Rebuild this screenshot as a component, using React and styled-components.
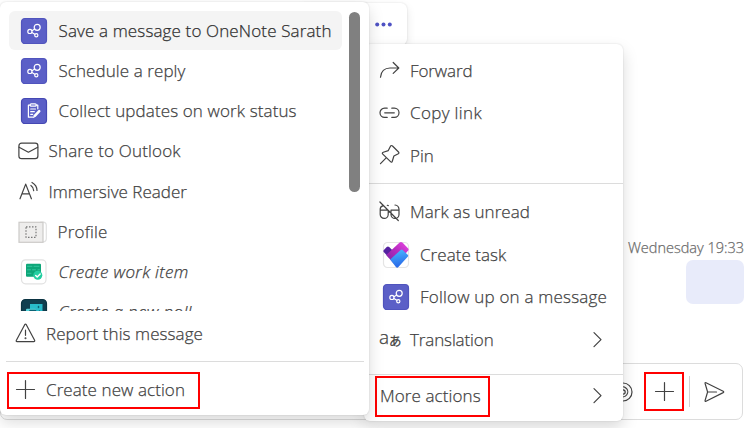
import React from "react";
import styled, { createGlobalStyle } from "styled-components";

const Global = createGlobalStyle`
  * { box-sizing: border-box; }
  body { margin: 0; background: #fff; overflow: hidden; }
`;

const Page = styled.div`
  position: relative;
  width: 750px;
  height: 428px;
  overflow: hidden;
  background: #fff;
  color: #424242;
  font-family: "Open Sans", "Noto Sans", sans-serif;
  font-size: 17px;
  font-weight: 300;
  -webkit-text-stroke: 0.25px currentColor;
`;

const Conversation = styled.main`
  display: flex;
  flex-direction: column;
  align-items: flex-end;
  height: 100%;
  padding: 237px 6px 8px 0;
`;

const Timestamp = styled.time`
  height: 23px;
  line-height: 21px;
  font-size: 14.5px;
  color: #6c6c6c;
  white-space: nowrap;
`;

const Bubble = styled.div`
  width: 58px;
  height: 44px;
  border-radius: 7px;
  background: #e8ebfa;
`;

const Composer = styled.div`
  display: flex;
  align-items: center;
  justify-content: flex-end;
  width: 743px;
  height: 57px;
  margin-top: auto;
  margin-right: 1px;
  padding-right: 17px;
  border: 1px solid #dcdcdc;
  border-radius: 7px;
`;

const AddButton = styled.button`
  display: grid;
  place-items: center;
  width: 40px;
  height: 39px;
  margin: 0 5px 0 12px;
  padding: 0;
  border: 2px solid #f00;
  background: none;
`;

const ComposerDivider = styled.span`
  width: 1px;
  height: 31px;
  margin-right: 14px;
  background: #d1d1d1;
`;

const Menu = styled.section`
  position: absolute;
  display: flex;
  flex-direction: column;
  background: #fff;
  border-radius: 6px;
  box-shadow: 0 0 2px rgba(0, 0, 0, 0.14), 0 7px 16px rgba(0, 0, 0, 0.15);
`;

const MessageToolbar = styled(Menu)`
  left: 300px;
  top: 3px;
  width: 107px;
  height: 42px;
  flex-direction: row;
  align-items: center;
  justify-content: flex-end;
  padding: 0 14px 0 0;
  box-shadow: 0 0 2px rgba(0, 0, 0, 0.13), 0 4px 10px rgba(0, 0, 0, 0.1);
`;

const MessageMenu = styled(Menu)`
  left: 364px;
  top: 44px;
  width: 259px;
  height: 377px;
  padding-top: 5.4px;
`;

const ActionsMenu = styled(Menu)`
  left: 0;
  top: 2px;
  width: 369px;
  height: 413px;
  padding-top: 9px;
`;

const ActionList = styled.div`
  display: flex;
  justify-content: space-between;
  height: 300px;
  padding: 0 9px;
  overflow: hidden;
`;

const ActionItems = styled.div`
  width: 333px;
`;

const ScrollThumb = styled.div`
  width: 11px;
  height: 180px;
  margin-top: 1px;
  border-radius: 6px;
  background: #808080;
`;

const ActionRow = styled.div`
  display: flex;
  align-items: center;
  gap: ${(p) => (p.$badge ? 11.5 : 10.5)}px;
  height: 39px;
  margin-bottom: 1.25px;
  padding-left: ${(p) => (p.$badge ? 12 : 9)}px;
  border-radius: 6px;
  background: ${(p) => (p.$selected ? "#f4f4f4" : "transparent")};
  color: ${(p) => (p.$selected ? "#303030" : "inherit")};
`;

const MenuRow = styled.div`
  display: flex;
  align-items: center;
  gap: ${(p) => (p.$badge ? 11 : 10)}px;
  height: 42.5px;
  padding: 0 21px 0 ${(p) => (p.$badge ? 19 : 15)}px;
`;

const Divider = styled.hr`
  flex: none;
  height: 1px;
  margin: ${(p) => p.$margin};
  border: 0;
  background: #dcdcdc;
`;

const Label = styled.span`
  flex: 1;
  line-height: 24px;
  white-space: nowrap;
  letter-spacing: ${(p) => p.$tracking || 0}px;
  font-style: ${(p) => (p.$italic ? "italic" : "normal")};
`;

const ReportRow = styled.div`
  display: flex;
  align-items: center;
  gap: 10px;
  height: 45px;
  padding-left: 15px;
`;

const CreateAction = styled.button`
  display: flex;
  align-items: center;
  gap: 11px;
  width: 193px;
  height: 37px;
  margin: 10px 0 0 7px;
  padding: 0 0 2px 7px;
  border: 2px solid #f00;
  background: none;
  color: inherit;
  font: inherit;
  text-align: left;
`;

const MoreRow = styled.div`
  display: flex;
  align-items: center;
  justify-content: space-between;
  height: 43px;
  padding: 0 21px 0 11px;
`;

const MoreButton = styled.button`
  display: flex;
  align-items: center;
  width: 115px;
  height: 41px;
  padding: 0 0 1px 3px;
  border: 2px solid #f00;
  background: none;
  color: inherit;
  font: inherit;
  text-align: left;
`;

const Svg = styled.svg`
  flex: none;
  display: block;
  overflow: visible;
  fill: none;
  stroke: #424242;
  stroke-width: 1.2;
  stroke-linecap: round;
  stroke-linejoin: round;
`;

const Glyph = ({ w = 20, h = 20, children }) => (
  <Svg width={w} height={h} viewBox={`0 0 ${w} ${h}`}>{children}</Svg>
);

const FlowIcon = () => (
  <Glyph w={26} h={26}>
    <rect x=".5" y=".5" width="25" height="25" rx="3.5" fill="#5b5fc7" stroke="#5054bd" />
    <g stroke="#fff" strokeWidth="1.2">
      <circle cx="16.2" cy="9.3" r="3" />
      <circle cx="8.9" cy="13.4" r="2.1" />
      <circle cx="15.3" cy="17.2" r="1.6" />
      <path d="M11 12.8l2.7-1.7M10.9 14.5l2.9 1.8" />
    </g>
  </Glyph>
);

const ClipboardIcon = () => (
  <Glyph w={26} h={26}>
    <rect x=".5" y=".5" width="25" height="25" rx="3.5" fill="#5b5fc7" stroke="#4548b3" />
    <g stroke="#fff" strokeWidth="1.2">
      <path d="M9 7.2H7.4v12h4.3M15.2 7.2h1.6v3.6" />
      <rect x="9.2" y="5.8" width="6" height="2.4" rx="1" />
      <path d="M9.7 11h4.8M9.7 13.7h3.6M9.7 16.3h2" />
      <path d="M18.2 13.2l-4.4 4.7" strokeWidth="2.6" />
      <path d="M12.7 19.4l.8-1.8" />
    </g>
  </Glyph>
);

const MailIcon = () => (
  <Glyph>
    <rect x=".9" y="2.2" width="19" height="15.5" rx="2.7" />
    <path d="M1.1 6.2l9.3 5 9.3-5" />
  </Glyph>
);

const ReaderIcon = () => (
  <Glyph>
    <path d="M2 16.8L7.7 2.1 13.4 16.8M4 11.8h7.5M12.9 3.5c1.8 1.2 2.7 3 2.8 5.1M14 .5c3.2 1.8 5 4.5 5 7.9" />
  </Glyph>
);

const ProfileIcon = () => (
  <Glyph w={29} h={22}>
    <path d="M22.5 1.2h2.5q3.3 0 3.3 3.3v13q0 3.3-3.3 3.3h-2.5" stroke="#e1e1e1" />
    <rect x="1" y="1.3" width="24" height="20" fill="#eeedec" stroke="#cccac8" strokeLinejoin="miter" />
    <rect x="8" y="5.8" width="10" height="10.5" stroke="#777" strokeDasharray="1.5 1.5" strokeLinecap="butt" />
  </Glyph>
);

const WorkItemIcon = () => (
  <Glyph w={26} h={26}>
    <rect x=".5" y=".8" width="24.5" height="24" rx="4" fill="#fff" stroke="#e2e2e2" />
    <rect x="5" y="4.8" width="15" height="13" rx="1" fill="#0da678" stroke="none" />
    <path d="M6.5 7.3H11M13 7.3h5M6.5 10.8h3M11.5 10.8h3M17 10.8h1.5M6.5 14.3H10" stroke="#52dfba" strokeWidth=".7" strokeOpacity=".8" />
    <circle cx="16.8" cy="16.3" r="4.5" fill="#24cfa2" stroke="none" />
    <path d="M14.7 16.4l1.5 1.5 3-3" stroke="#fff" strokeWidth="1.4" />
  </Glyph>
);

const PollIcon = () => (
  <Glyph w={26} h={26}>
    <rect x=".5" y=".5" width="25" height="25" rx="4" fill="#103f50" stroke="#0b3342" />
    <rect x="9" y="5" width="12.5" height="11" fill="#29bccb" stroke="none" />
    <rect x="5" y="9.7" width="10" height="10" rx="1" fill="#56d5dc" stroke="none" />
    <path d="M17.5 7.5v1M14.5 11.5H9v1.5M18.5 12v3" stroke="#0c6475" strokeWidth="1.5" />
  </Glyph>
);

const WarningIcon = () => (
  <Glyph w={21}>
    <path d="M9.7 .7q.8-1.1 1.6 0l8.3 15.5q.5 1.3-.9 1.5H2.1q-1.4-.2-.7-1.5zM10.5 6.2v5.1" />
    <circle cx="10.5" cy="14.2" r=".4" fill="#424242" />
  </Glyph>
);

const PlusIcon = () => (
  <Glyph w={19} h={19}><path d="M9.5.5v18M.5 9.5h18" /></Glyph>
);

const ForwardIcon = () => (
  <Glyph w={21}>
    <path d="M1.5 16.2C2 10.7 5.5 7 11 7h8.7M14.2 1.5L19.8 7l-5.6 5.4" />
  </Glyph>
);

const LinkIcon = () => (
  <Glyph w={21}>
    <path d="M8.2 5.2H5.6a4.6 4.6 0 0 0 0 9.2h2.6M12.8 5.2h2.6a4.6 4.6 0 0 1 0 9.2h-2.6M5.7 9.8h9.6" />
  </Glyph>
);

const PinIcon = () => (
  <Glyph w={21}>
    <path d="M11.6 0q.9-1 1.9 0l6 6q.9 1-.2 1.8l-4.4 2.2-1.6 5.2q-.6 1.7-1.8.5L3.8 8.1q-1.2-1.2.5-1.8l5-1.7zM7.4 11.7L1.5 17.7" />
  </Glyph>
);

const UnreadIcon = () => (
  <Glyph w={21}>
    <path d="M1.2 8.2h8v4.2a4 4 0 0 1-8 0zM12 8.2h8v4.2a4 4 0 0 1-8 0zM1.2 8.6V7q.1-2.5 2.6-3.2M9.2 10.3q1.4-.8 2.8 0M20 8.6V7.2q-.3-3.8-4-4.2M8.3 3.3l1 .3M.9 0l18.4 18.5" />
  </Glyph>
);

const TaskIcon = () => (
  <Glyph w={26} h={26}>
    <defs>
      <linearGradient id="taskPink" x1="0" y1="1" x2="1" y2="0">
        <stop offset="0" stopColor="#7522a3" />
        <stop offset=".55" stopColor="#b92bc0" />
        <stop offset="1" stopColor="#e94ae6" />
      </linearGradient>
      <linearGradient id="taskBlue" x1=".3" y1="0" x2=".5" y2="1">
        <stop offset="0" stopColor="#49b7ff" />
        <stop offset="1" stopColor="#2764e7" />
      </linearGradient>
    </defs>
    <rect x=".5" y=".5" width="25" height="25" rx="4" fill="#fff" stroke="#e5e5e5" />
    <g stroke="none">
      <path d="M.7 10q-.8-1 .2-2.1l2.8-3q1.2-1 2.5 0l5 5-5 6z" fill="#5421a0" />
      <path d="M3.2 13L16.6.5q1.4-1.2 2.8 0l5.8 6q.8 1 0 2L13.5 21.7l-3.1-.5z" fill="url(#taskPink)" />
      <path d="M7.2 17.4L17.7 8q1-.8 2 0l5 4.7q1 1.1 0 2.1l-9.3 10.3q-1.2 1.2-2.5 0z" fill="url(#taskBlue)" />
    </g>
  </Glyph>
);

const TranslateGlyph = styled.span`
  display: flex;
  width: 21px;
  padding-bottom: 2px;
  line-height: 16px;
  font-size: 19px;
`;

const KanaGlyph = styled.span`
  margin: 4px 0 0 0;
  font: 12.5px/16px "Noto Sans CJK JP", sans-serif;
`;

const TranslateIcon = () => (
  <TranslateGlyph aria-hidden="true">a<KanaGlyph>あ</KanaGlyph></TranslateGlyph>
);

const Chevron = () => (
  <Glyph w={9} h={16}><path d="M1 .7l7 7-7 7" /></Glyph>
);

const LoopIcon = () => (
  <Glyph>
    <circle cx="11" cy="10" r="9" />
    <path d="M7 6.5A5 5 0 1 1 8 14" />
    <circle cx="11" cy="10" r="2.2" />
  </Glyph>
);

const SendIcon = () => (
  <Glyph w={21}>
    <path d="M1.1 1.5q-.3-1.2.9-.8l17.2 8.5q1 .7 0 1.4L2 19.2q-1.2.5-.9-.8L3.6 10zM3.8 10h8.7" />
  </Glyph>
);

const MoreDots = () => (
  <Glyph w={18} h={5}>
    <g fill="#4f52c4" stroke="none">
      <circle cx="2.2" cy="2.5" r="2" />
      <circle cx="8.5" cy="2.5" r="2" />
      <circle cx="14.8" cy="2.5" r="2" />
    </g>
  </Glyph>
);

const actions = [
  { text: "Save a message to OneNote Sarath", Icon: FlowIcon, badge: true, selected: true, tracking: 0.135 },
  { text: "Schedule a reply", Icon: FlowIcon, badge: true, tracking: 0.08 },
  { text: "Collect updates on work status", Icon: ClipboardIcon, badge: true, tracking: 0.12 },
  { text: "Share to Outlook", Icon: MailIcon, tracking: 0.17 },
  { text: "Immersive Reader", Icon: ReaderIcon, tracking: 0.02 },
  { text: "Profile", Icon: ProfileIcon, tracking: 0.2 },
  { text: "Create work item", Icon: WorkItemIcon, badge: true, italic: true, tracking: 0.35 },
  { text: "Create a new poll", Icon: PollIcon, badge: true, italic: true, tracking: 0.35 },
];

const messageItems = [
  { text: "Forward", Icon: ForwardIcon, tracking: -0.1 },
  { text: "Copy link", Icon: LinkIcon, tracking: 0.35 },
  { text: "Pin", Icon: PinIcon },
];

const taskItems = [
  { text: "Mark as unread", Icon: UnreadIcon, tracking: 0.03 },
  { text: "Create task", Icon: TaskIcon, badge: true, tracking: 0.05 },
  { text: "Follow up on a message", Icon: FlowIcon, badge: true, tracking: 0.2 },
  { text: "Translation", Icon: TranslateIcon, tracking: -0.12, submenu: true },
];

const MenuItems = ({ items }) =>
  items.map(({ text, Icon, tracking, badge, submenu }) => (
    <MenuRow key={text} $badge={badge}>
      <Icon />
      <Label $tracking={tracking}>{text}</Label>
      {submenu && <Chevron />}
    </MenuRow>
  ));

export default function App() {
  return (
    <Page>
      <Global />
      <Conversation>
        <Timestamp>Wednesday 19:33</Timestamp>
        <Bubble />
        <Composer>
          <LoopIcon />
          <AddButton aria-label="Add"><PlusIcon /></AddButton>
          <ComposerDivider />
          <SendIcon />
        </Composer>
      </Conversation>
      <MessageToolbar><MoreDots /></MessageToolbar>
      <MessageMenu>
        <MenuItems items={messageItems} />
        <Divider $margin="6.1px 0 7px" />
        <MenuItems items={taskItems} />
        <Divider $margin="13px 0 0" />
        <MoreRow>
          <MoreButton><Label $tracking={0.1}>More actions</Label></MoreButton>
          <Chevron />
        </MoreRow>
      </MessageMenu>
      <ActionsMenu>
        <ActionList>
          <ActionItems>
            {actions.map(({ text, Icon, badge, selected, tracking, italic }) => (
              <ActionRow key={text} $badge={badge} $selected={selected}>
                <Icon />
                <Label $tracking={tracking} $italic={italic}>{text}</Label>
              </ActionRow>
            ))}
          </ActionItems>
          <ScrollThumb />
        </ActionList>
        <ReportRow>
          <WarningIcon />
          <Label $tracking={0.08}>Report this message</Label>
        </ReportRow>
        <Divider $margin="5px 5px 0 6px" />
        <CreateAction>
          <PlusIcon />
          <Label $tracking={0.08}>Create new action</Label>
        </CreateAction>
      </ActionsMenu>
    </Page>
  );
}
